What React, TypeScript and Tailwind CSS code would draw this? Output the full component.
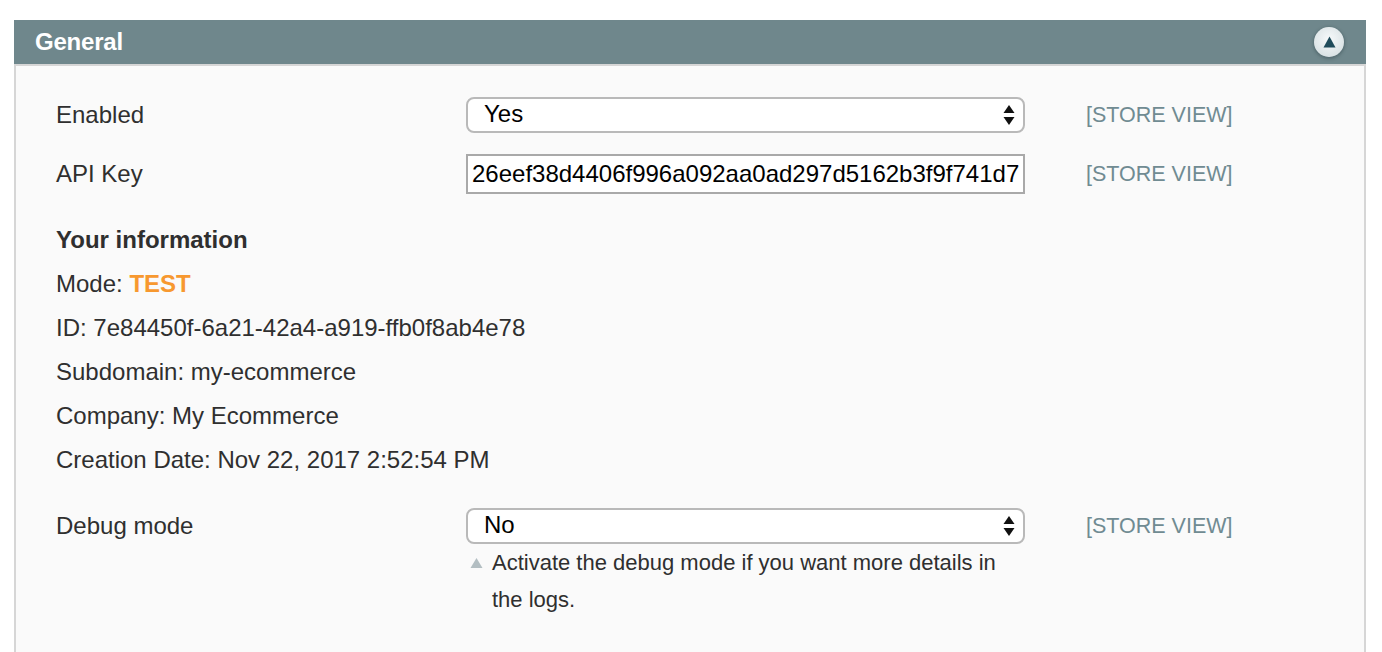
import React from "react";

function SelectArrows() {
  return (
    <svg width="12" height="22" viewBox="0 0 12 22" className="shrink-0">
      <path d="M6 1 L11.5 9 H0.5 Z" fill="#111" />
      <path d="M6 21 L11.5 13 H0.5 Z" fill="#111" />
    </svg>
  );
}

function FakeSelect({ value }: { value: string }) {
  return (
    <div className="flex h-[36px] w-[559px] items-center justify-between rounded-[8px] border-2 border-[#b9b9b9] bg-white pl-[16px] pr-[8px] text-[24px] text-black">
      <span className="-mt-[3px]">{value}</span>
      <SelectArrows />
    </div>
  );
}

function Scope() {
  return <div className="ml-[61px] text-[21.5px] text-[#708b92]">[STORE VIEW]</div>;
}

export default function App() {
  return (
    <div
      className="min-h-[652px] bg-white pt-[20px] pl-[14px] pr-[16px]"
      style={{ fontFamily: '"Liberation Sans", Arial, Helvetica, sans-serif' }}
    >
      <div className="flex h-[44px] items-center justify-between bg-[#6f878c] pl-[21px] pr-[22px]">
        <div className="text-[24px] font-bold text-white tracking-[-0.2px]">General</div>
        <div className="flex h-[30px] w-[30px] items-center justify-center rounded-full bg-[radial-gradient(circle_at_50%_40%,#f6f9fa,#d0dadd)] shadow-[0_1px_3px_1px_rgba(40,60,65,0.35)]">
          <svg width="13" height="12" viewBox="0 0 13 12" className="-mt-[1px]">
            <path d="M6.5 0.5 L12.5 11.5 H0.5 Z" fill="#1f4b5a" />
          </svg>
        </div>
      </div>
      <div className="min-h-[588px] border-x-2 border-t-2 border-[#d6d6d6] bg-[#fafafa] pl-[40px] pt-[31px] text-[24px] text-[#2f2f2f]">
        <div className="flex items-center">
          <div className="w-[410px]">Enabled</div>
          <FakeSelect value="Yes" />
          <Scope />
        </div>
        <div className="mt-[21px] flex items-center">
          <div className="w-[410px]">API Key</div>
          <div className="flex h-[40px] w-[559px] items-center border-2 border-[#a9a9a9] bg-white pl-[4px] text-[24px] text-black">
            26eef38d4406f996a092aa0ad297d5162b3f9f741d7
          </div>
          <Scope />
        </div>
        <div className="mt-[24px] leading-[44px]">
          <div className="font-bold">Your information</div>
          <div>
            Mode: <span className="font-bold text-[#f7982f]">TEST</span>
          </div>
          <div>ID: 7e84450f-6a21-42a4-a919-ffb0f8ab4e78</div>
          <div>Subdomain: my-ecommerce</div>
          <div>Company: My Ecommerce</div>
          <div>Creation Date: Nov 22, 2017 2:52:54 PM</div>
        </div>
        <div className="mt-[26px] flex">
          <div className="flex h-[36px] w-[410px] items-center">Debug mode</div>
          <div className="w-[559px]">
            <FakeSelect value="No" />
            <div className="flex pl-[4px] text-[22px] leading-[37px]">
              <svg width="13" height="12" viewBox="0 0 13 12" className="mt-[13px] mr-[9px] shrink-0">
                <path d="M6.5 1 L12.5 11 H0.5 Z" fill="#b3bec2" />
              </svg>
              <div className="w-[510px]">
                Activate the debug mode if you want more details in the logs.
              </div>
            </div>
          </div>
          <div className="flex h-[36px] items-center">
            <Scope />
          </div>
        </div>
      </div>
    </div>
  );
}
